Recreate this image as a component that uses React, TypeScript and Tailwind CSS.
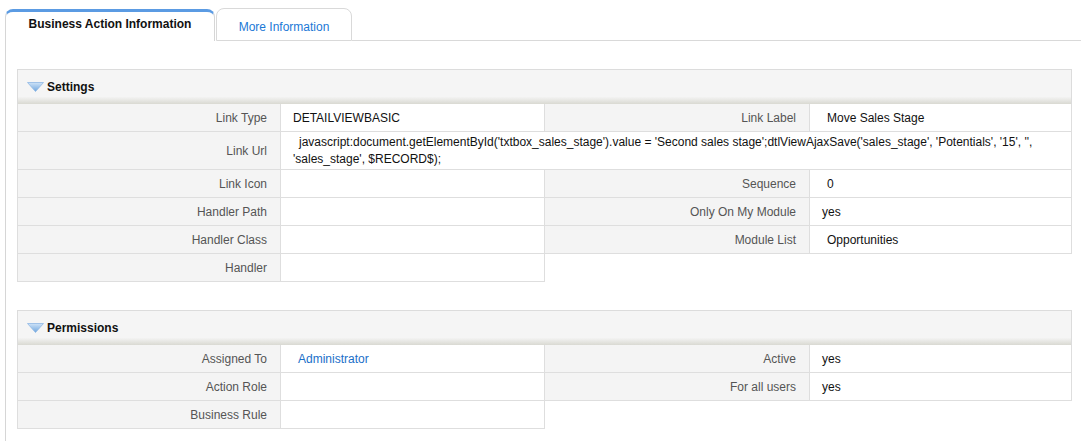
import React from "react";

type Cell = { label: string; value?: React.ReactNode; indent?: boolean; link?: boolean };

const settingsRows: { cells: Cell[]; wide?: boolean }[] = [
  { cells: [{ label: "Link Type", value: "DETAILVIEWBASIC" }, { label: "Link Label", value: "Move Sales Stage", indent: true }] },
  {
    wide: true,
    cells: [
      {
        label: "Link Url",
        value:
          "javascript:document.getElementById('txtbox_sales_stage').value = 'Second sales stage';dtlViewAjaxSave('sales_stage', 'Potentials', '15', '', 'sales_stage', $RECORD$);",
      },
    ],
  },
  { cells: [{ label: "Link Icon" }, { label: "Sequence", value: "0", indent: true }] },
  { cells: [{ label: "Handler Path" }, { label: "Only On My Module", value: "yes" }] },
  { cells: [{ label: "Handler Class" }, { label: "Module List", value: "Opportunities", indent: true }] },
  { cells: [{ label: "Handler" }] },
];

const permissionRows: { cells: Cell[]; wide?: boolean }[] = [
  { cells: [{ label: "Assigned To", value: "Administrator", indent: true, link: true }, { label: "Active", value: "yes" }] },
  { cells: [{ label: "Action Role" }, { label: "For all users", value: "yes" }] },
  { cells: [{ label: "Business Rule" }] },
];

function Triangle() {
  return (
    <svg width="17" height="10" viewBox="0 0 17 10" className="shrink-0">
      <defs>
        <linearGradient id="tri" x1="0" y1="0" x2="0" y2="1">
          <stop offset="0%" stopColor="#cfe3f7" />
          <stop offset="100%" stopColor="#6fa6de" />
        </linearGradient>
      </defs>
      <polygon points="0.5,0.5 16.5,0.5 8.5,9.5" fill="url(#tri)" stroke="#8fb8e4" strokeWidth="0.8" strokeLinejoin="round" />
    </svg>
  );
}

function Block({ title, rows }: { title: string; rows: { cells: Cell[]; wide?: boolean }[] }) {
  return (
    <div>
      <div className="flex h-[35px] items-center gap-[3px] border border-b-0 border-[#dcdcdc] bg-[linear-gradient(to_bottom,#f5f5f5_0%,#f5f5f5_78%,#d9d9d2_100%)] pb-[1px] pl-[9px] font-bold text-[#111]">
        <Triangle />
        {title}
      </div>
      <div className="grid grid-cols-[264px_264px_265px_1fr]">
        {rows.map((row) =>
          row.cells.map((c, i) => (
            <React.Fragment key={row.cells[0].label + i}>
              <div
                className={`flex items-center justify-end border-b border-r border-[#dedede] bg-[#f4f4f4] pr-[13px] text-[#555] ${
                  i === 0 ? "border-l" : ""
                } ${row.wide ? "min-h-[38px]" : "min-h-[28px]"}`}
              >
                {c.label}
              </div>
              <div
                className={`flex items-center border-b border-r border-[#dedede] bg-white text-[#111] ${
                  row.wide ? "col-span-3 min-h-[38px] pb-[1px] pl-[12px] pr-[4px] pt-[2px] leading-[17px]" : "min-h-[28px] pl-[12px]"
                } ${c.indent ? "pl-[17px]" : ""}`}
              >
                {row.wide ? (
                  <span className="block indent-[6px]">{c.value}</span>
                ) : c.link ? (
                  <a className="text-[#1a6fc9]">{c.value}</a>
                ) : (
                  c.value
                )}
              </div>
            </React.Fragment>
          ))
        )}
      </div>
    </div>
  );
}

export default function App() {
  return (
    <div className="h-[441px] w-[1081px] overflow-hidden bg-white font-['Liberation_Sans',Arial,sans-serif] text-[12px]">
      <div className="flex h-[41px] items-end pl-[5px] pt-[8px]">
        <div className="flex h-[32px] w-[210px] items-start justify-center rounded-t-[8px] border-x border-t-[3px] border-[#d6d6d6] border-t-[#5b9be3] bg-white pt-[3px] font-bold text-[#111]">
          Business Action Information
        </div>
        <div className="ml-[1px] flex h-[33px] w-[136px] items-center justify-center rounded-t-[8px] border border-[#d9d9d9] bg-white pt-[4px] text-[#1b78d6]">
          More Information
        </div>
        <div className="h-full flex-1 border-b border-[#d9d9d9]" />
      </div>
      <div className="ml-[5px] h-[400px] border-l border-[#d6d6d6] pl-[11px] pr-[9px] pt-[28px]">
        <Block title="Settings" rows={settingsRows} />
        <div className="h-[28px]" />
        <Block title="Permissions" rows={permissionRows} />
      </div>
    </div>
  );
}
